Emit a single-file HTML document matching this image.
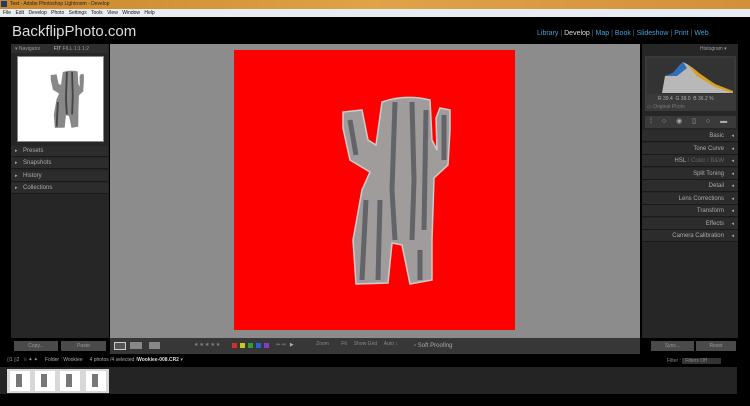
<!DOCTYPE html>
<html><head><style>
*{margin:0;padding:0;box-sizing:border-box}
body{width:750px;height:406px;background:#000;position:relative;overflow:hidden;font-family:"Liberation Sans",sans-serif;color:#bbb}
.a{position:absolute}
.t{font-size:5px;white-space:nowrap}
.row{position:absolute;left:11px;width:97px;height:11px;background:#2c2c2c;border-bottom:1px solid #1a1a1a;font-size:6px;color:#aaa;padding:2px 0 0 12px}
.row:before{content:"▸";position:absolute;left:4px;font-size:5px}
.rr{position:absolute;left:642px;width:96px;height:12px;background:#2c2c2c;border-bottom:1px solid #1a1a1a;font-size:6px;color:#aaa;text-align:right;padding:3px 14px 0 0}
.rr:after{content:"◂";position:absolute;right:4px;font-size:5px;top:3px}
</style></head><body>
<div class="a" style="left:0;top:0;width:750px;height:9px;background:linear-gradient(90deg,#c9862c,#e0a348 50%,#d3903a)"></div>
<div class="a t" style="left:10px;top:1px;color:#222">Test - Adobe Photoshop Lightroom - Develop</div>
<div class="a" style="left:1px;top:1px;width:6px;height:6px;background:#1c3c6a"></div>
<div class="a" style="left:0;top:9px;width:750px;height:8px;background:#e8edf3"></div>
<div class="a t" style="left:3px;top:10px;color:#111;word-spacing:3px">File Edit Develop Photo Settings Tools View Window Help</div>
<div class="a" style="left:12px;top:23px;font-size:15px;color:#ddd">BackflipPhoto.com</div>
<div class="a" style="left:537px;top:30px;font-size:7px;color:#3fa0d8;white-space:nowrap">Library <span style="color:#666">|</span> <span style="color:#ddd">Develop</span> <span style="color:#666">|</span> Map <span style="color:#666">|</span> Book <span style="color:#666">|</span> Slideshow <span style="color:#666">|</span> Print <span style="color:#666">|</span> Web</div>
<!-- left panel -->
<div class="a" style="left:11px;top:44px;width:98px;height:294px;background:#262626"></div>
<div class="a" style="left:11px;top:44px;width:97px;height:9px;background:#2e2e2e"></div>
<div class="a t" style="left:15px;top:46px;color:#999">▾ Navigator <span style="margin-left:12px;color:#ccc">FIT</span> FILL 1:1 1:2</div>
<div class="a" style="left:17px;top:56px;width:87px;height:86px;background:#fff;border:1px solid #888"></div>
<svg class="a" style="left:17px;top:56px" width="87" height="86" viewBox="234 50 281 280" preserveAspectRatio="none"><path d="M382,102 Q405,94 430,100 L432,140 L437,150 L436,118 L440,108 L450,110 L450,130 L448,165 L434,178 L432,240 L432,280 L410,284 L402,245 L392,243 L388,283 L356,284 L353,240 L362,190 L370,172 L350,160 L343,128 L343,112 L362,110 L368,140 L376,145 Z" fill="#888"/><g stroke="#444" stroke-width="6" fill="none"><path d="M395,102 L392,190 L395,240"/><path d="M412,102 L414,180 L412,240"/><path d="M366,200 L362,280"/></g></svg>
<div class="row" style="top:146px">Presets</div>
<div class="row" style="top:158px">Snapshots</div>
<div class="row" style="top:171px">History</div>
<div class="row" style="top:183px">Collections</div>
<div class="a" style="left:14px;top:341px;width:44px;height:10px;background:#4a4a4a;font-size:5px;color:#999;text-align:center;padding-top:2px">Copy...</div>
<div class="a" style="left:61px;top:341px;width:45px;height:10px;background:#4a4a4a;font-size:5px;color:#999;text-align:center;padding-top:2px">Paste</div>
<!-- center -->
<div class="a" style="left:110px;top:44px;width:530px;height:294px;background:#8c8c8c"></div>
<div class="a" style="left:234px;top:50px;width:281px;height:280px;background:#ff0000"></div>
<svg class="a" style="left:0;top:0" width="750" height="406">
<path d="M382,102 Q405,94 430,100 L432,140 L437,150 L436,118 L440,108 L450,110 L450,130 L448,165 L434,178 L432,240 L432,280 L410,284 L402,245 L392,243 L388,283 L356,284 L353,240 L362,190 L370,172 L350,160 L343,128 L343,112 L362,110 L368,140 L376,145 Z" fill="#a09c9c" stroke="#ccc" stroke-width="1.5"/>
<g stroke="#55575e" stroke-width="5" fill="none" opacity=".8"><path d="M395,102 L392,190 L395,240"/><path d="M412,102 L414,180 L412,240"/><path d="M426,110 L424,230"/><path d="M350,120 L356,155"/><path d="M444,115 L444,160"/><path d="M366,200 L362,280"/><path d="M380,200 L378,280"/><path d="M420,250 L420,280"/></g>
</svg>
<!-- toolbar -->
<div class="a" style="left:110px;top:338px;width:530px;height:16px;background:#373737"></div>
<div class="a" style="left:114px;top:342px;width:12px;height:8px;border:1px solid #ccc;background:#555"></div>
<div class="a" style="left:130px;top:342px;width:12px;height:7px;background:#888"></div>
<div class="a" style="left:149px;top:342px;width:11px;height:7px;background:#888"></div>
<div class="a t" style="left:194px;top:342px;color:#888;letter-spacing:1px">★★★★★</div>
<div class="a" style="left:232px;top:343px;width:5px;height:5px;background:#d03030;box-shadow:8px 0 #c8c828,16px 0 #30a030,24px 0 #3060d0,32px 0 #8040c0"></div>
<div class="a t" style="left:276px;top:342px;color:#aaa">⇦ ⇨ &nbsp; ▶</div>
<div class="a t" style="left:316px;top:341px;color:#888">Zoom &nbsp; &nbsp; &nbsp; &nbsp; Fit &nbsp; &nbsp; Show Grid &nbsp; &nbsp; Auto ↕</div>
<div class="a t" style="left:414px;top:343px;color:#aaa;font-size:6px">▫ Soft Proofing</div>
<!-- right panel -->
<div class="a" style="left:642px;top:44px;width:96px;height:294px;background:#262626"></div>
<div class="a t" style="left:700px;top:46px;color:#999">Histogram ▾</div>
<div class="a" style="left:645px;top:56px;width:91px;height:55px;background:#3a3a3a"></div>
<svg class="a" style="left:647px;top:58px" width="87" height="36"><rect width="87" height="36" fill="#333"/><path d="M0,35 L15,35 L18,18 L26,15 L32,8 L36,4 L40,6 L46,10 L52,15 L60,21 L68,26 L76,31 L86,33 L86,35 Z" fill="#b8b8b8"/><path d="M18,18 L26,15 L32,8 L36,4 L40,10 L30,18 Z" fill="#2e6fb8"/><path d="M40,6 L52,15 L68,26 L86,33 L86,35 L68,29 L50,18 Z" fill="#d8a020"/></svg>
<div class="a t" style="left:658px;top:96px;color:#aaa">R 39.4 &nbsp;G 38.0 &nbsp;B 36.2 %</div>
<div class="a t" style="left:647px;top:104px;color:#777">▭ Original Photo</div>
<div class="a" style="left:645px;top:116px;width:91px;height:12px;background:#3a3a3a"></div>
<div class="a t" style="left:650px;top:117px;color:#aaa;font-size:7px;letter-spacing:4px">⁞ ○ ◉ ▯ ○ ▬</div>
<div class="rr" style="top:130px">Basic</div>
<div class="rr" style="top:143px">Tone Curve</div>
<div class="rr" style="top:155px">HSL <span style="color:#666">/ Color / B&amp;W</span></div>
<div class="rr" style="top:168px">Split Toning</div>
<div class="rr" style="top:180px">Detail</div>
<div class="rr" style="top:193px">Lens Corrections</div>
<div class="rr" style="top:205px">Transform</div>
<div class="rr" style="top:218px">Effects</div>
<div class="rr" style="top:230px">Camera Calibration</div>
<div class="a" style="left:651px;top:341px;width:43px;height:10px;background:#4a4a4a;font-size:5px;color:#999;text-align:center;padding-top:2px">Sync...</div>
<div class="a" style="left:696px;top:341px;width:40px;height:10px;background:#4a4a4a;font-size:5px;color:#999;text-align:center;padding-top:2px">Reset</div>
<!-- filmstrip -->
<div class="a t" style="left:7px;top:357px;color:#aaa">▯1 ▯2 &nbsp; ⁝⁝ ✦ ✦ &nbsp; &nbsp; Folder : Wookiee &nbsp; &nbsp; 4 photos /4 selected /<b style="color:#ddd">Wookiee-008.CR2</b> ▾</div>
<div class="a t" style="left:667px;top:358px;color:#888">Filter : <span style="background:#333;padding:0 14px 0 3px">Filters Off</span></div>
<div class="a" style="left:0;top:367px;width:737px;height:27px;background:#242424"></div>
<div class="a" style="left:7px;top:369px;width:102px;height:24px;background:#d8d8d8"></div>
<div class="a" style="left:10px;top:371px;width:20px;height:20px;background:#fff;box-shadow:25px 0 #fff,50px 0 #fff,76px 0 #fff"></div>
<div class="a" style="left:16px;top:374px;width:6px;height:13px;background:#777;box-shadow:25px 0 #777,50px 0 #777,76px 0 #777"></div>
</body></html>
